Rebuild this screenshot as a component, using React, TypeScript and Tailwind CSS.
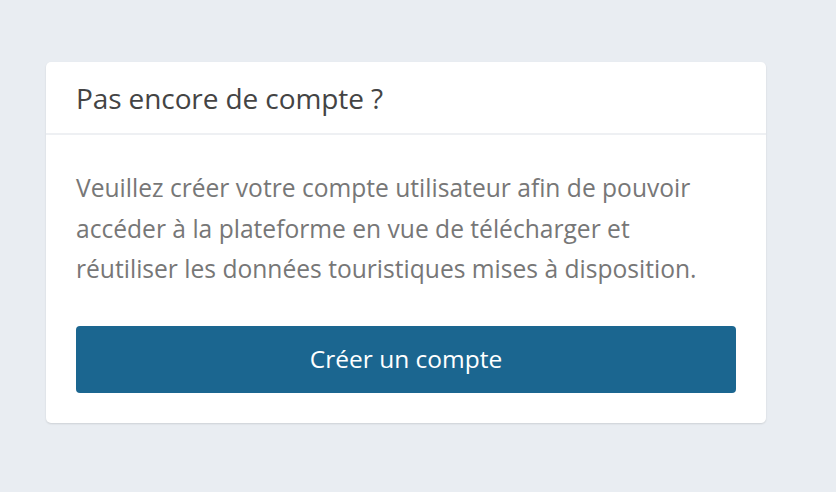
export default function App() {
  return (
    <div className="min-h-[492px] w-full bg-[#e9edf2] pt-[62px] pl-[46px] font-['Open_Sans',sans-serif]">
      <div className="w-[720px] rounded-[5px] bg-white shadow-[0_1px_2px_rgba(0,0,0,0.12)]">
        <div className="flex h-[73px] items-center border-b-2 border-[#eef0f3] px-[30px]">
          <h2 className="text-[28px] text-[#444] tracking-[-0.1px]">Pas encore de compte ?</h2>
        </div>
        <div className="px-[30px] pt-[33px] pb-[30px]">
          <p className="text-[24.6px] leading-[40.5px] text-[#777]">
            Veuillez créer votre compte utilisateur afin de pouvoir accéder à la plateforme en vue de télécharger et
            réutiliser les données touristiques mises à disposition.
          </p>
          <button className="mt-[36px] flex h-[67px] w-full items-center justify-center rounded-[4px] bg-[#1b6690] text-[24.5px] text-white">
            Créer un compte
          </button>
        </div>
      </div>
    </div>
  )
}
